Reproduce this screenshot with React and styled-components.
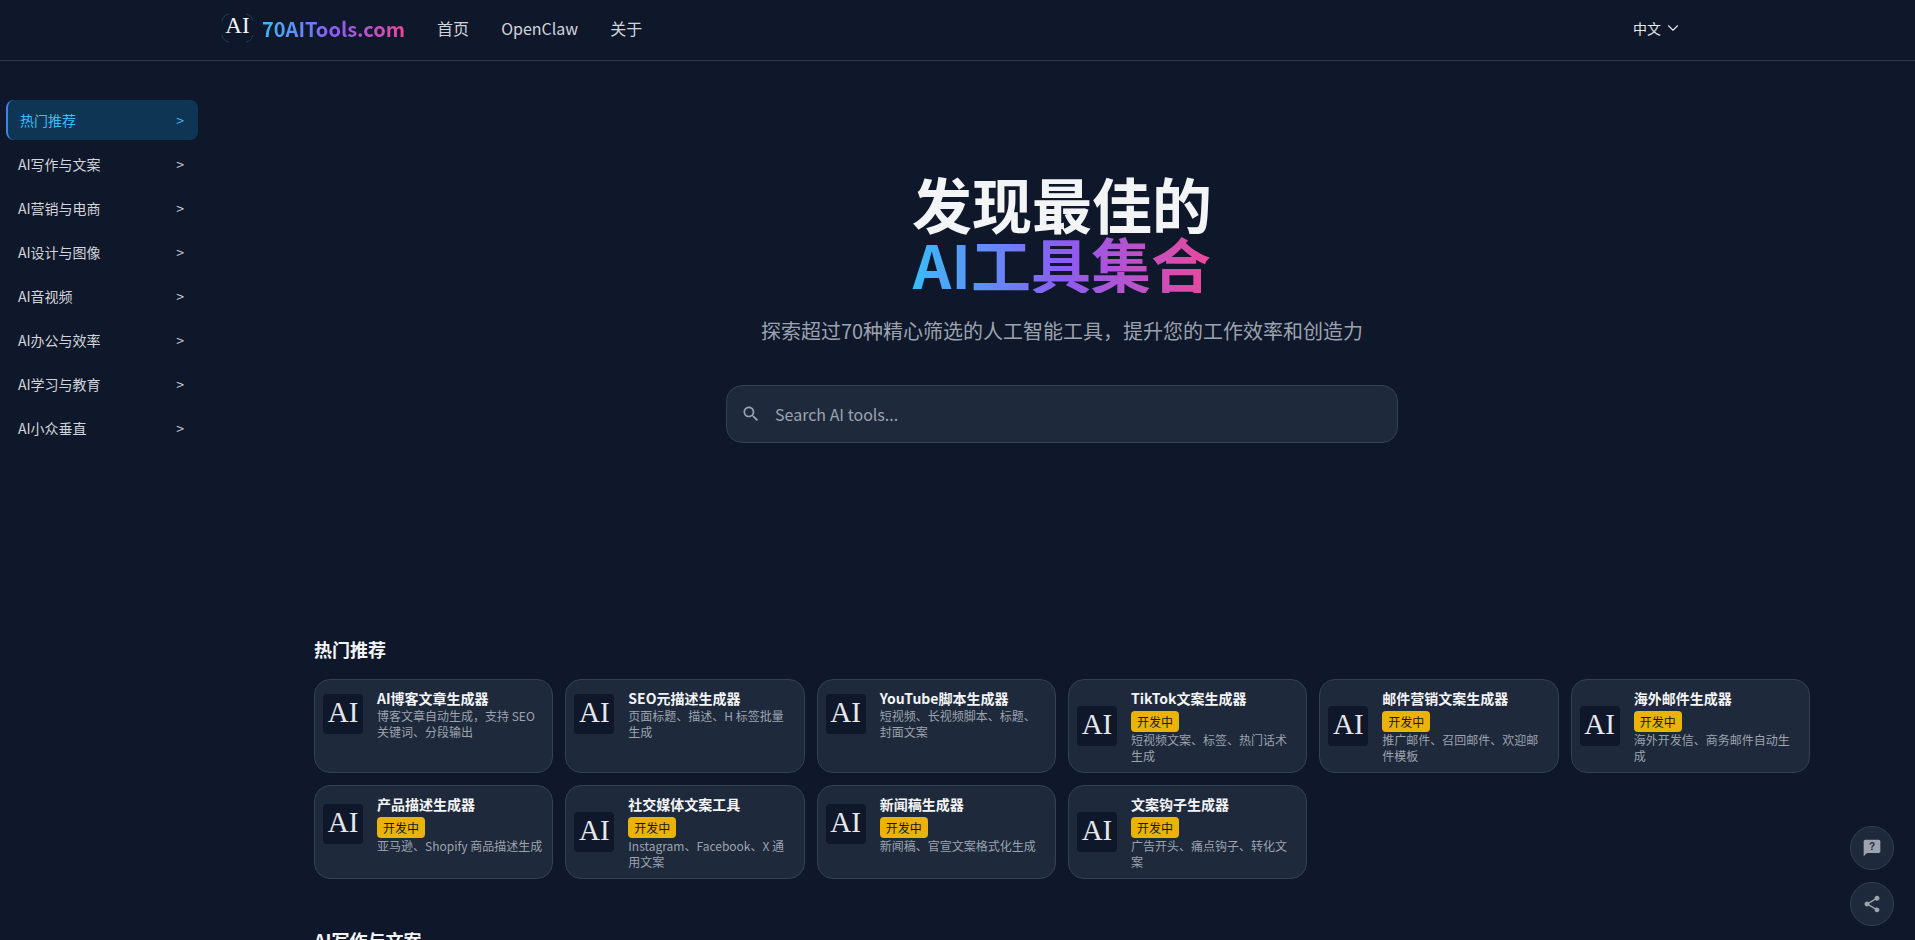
import React from 'react';
import styled, { createGlobalStyle } from 'styled-components';
import { ChevronDown } from 'lucide-react';

const hotTools = [
  { name: 'AI博客文章生成器', desc: '博客文章自动生成，支持 SEO 关键词、分段输出' },
  { name: 'SEO元描述生成器', desc: '页面标题、描述、H 标签批量生成' },
  { name: 'YouTube脚本生成器', desc: '短视频、长视频脚本、标题、封面文案' },
  { name: 'TikTok文案生成器', desc: '短视频文案、标签、热门话术生成', dev: true },
  { name: '邮件营销文案生成器', desc: '推广邮件、召回邮件、欢迎邮件模板', dev: true },
  { name: '海外邮件生成器', desc: '海外开发信、商务邮件自动生成', dev: true },
  { name: '产品描述生成器', desc: '亚马逊、Shopify 商品描述生成', dev: true },
  { name: '社交媒体文案工具', desc: 'Instagram、Facebook、X 通用文案', dev: true },
  { name: '新闻稿生成器', desc: '新闻稿、官宣文案格式化生成', dev: true },
  { name: '文案钩子生成器', desc: '广告开头、痛点钩子、转化文案', dev: true },
];

const categories = ['热门推荐', 'AI写作与文案', 'AI营销与电商', 'AI设计与图像', 'AI音视频', 'AI办公与效率', 'AI学习与教育', 'AI小众垂直'];

const GlobalStyle = createGlobalStyle`
  html, body {
    margin: 0;
    height: 100%;
    overflow: hidden;
    background: #0f172a;
    font-family: "Noto Sans CJK SC", "Noto Sans", sans-serif;
  }
  * { box-sizing: border-box; }
`;

const Page = styled.div`
  height: 100vh;
  overflow: hidden;
  background: #0f172a;
  color: #f3f4f6;
`;

const Header = styled.header`
  height: 61px;
  border-bottom: 1px solid #293548;
  display: flex;
  align-items: center;
  padding: 0 223px 4px 221px;
`;

const LogoSvg = styled.svg`
  width: 33px;
  height: 32px;
  flex: none;
  margin: 0 8px 1px 0;
`;

const LogoText = styled.span`
  font-size: 20px;
  font-weight: 700;
  background: linear-gradient(90deg, #38bdf8, #8b5cf6, #ec4899);
  -webkit-background-clip: text;
  background-clip: text;
  color: transparent;
  margin-right: 32px;
`;

const NavLink = styled.a`
  font-size: 16px;
  color: #d1d5db;
  margin-right: 32px;
`;

const Lang = styled.div`
  margin-left: auto;
  margin-right: 10px;
  display: flex;
  align-items: center;
  gap: 3px;
  font-size: 14px;
  color: #e5e7eb;
`;

const Body = styled.div`
  display: flex;
  align-items: flex-start;
`;

const Sidebar = styled.nav`
  width: 208px;
  flex: none;
  padding: 39px 10px 0 6px;
  display: flex;
  flex-direction: column;
  gap: 4px;
`;

const SideItem = styled.div`
  height: 40px;
  display: flex;
  align-items: center;
  justify-content: space-between;
  padding: 0 14px 0 12px;
  border-radius: 8px;
  font-size: 14px;
  color: ${p => (p.$active ? '#38bdf8' : '#d1d5db')};
  background: ${p => (p.$active ? '#0f3554' : 'transparent')};
  border-left: ${p => (p.$active ? '2px solid #3b82f6' : 'none')};
`;

const SideArrow = styled.span`
  font-size: 14px;
  line-height: 1;
  margin-bottom: 1px;
`;

const Main = styled.main`
  flex: 1;
  min-width: 0;
  padding: 0 105px 0 106px;
`;

const Hero = styled.section`
  display: flex;
  flex-direction: column;
  align-items: center;
  padding-top: 112px;
  height: 574px;
`;

const Title = styled.h1`
  margin: 0;
  font-size: 60px;
  line-height: 60px;
  font-weight: 700;
  text-align: center;
  color: #f3f4f6;
`;

const Gradient = styled.span`
  display: block;
  background: linear-gradient(90deg, #38bdf8, #8b5cf6, #ec4899);
  -webkit-background-clip: text;
  background-clip: text;
  color: transparent;
`;

const Subtitle = styled.p`
  margin: 24px 0 0;
  font-size: 20px;
  line-height: 28px;
  color: #9ca3af;
`;

const SearchBox = styled.div`
  margin-top: 40px;
  width: 672px;
  height: 58px;
  display: flex;
  align-items: center;
  gap: 14px;
  padding: 0 14px;
  border-radius: 16px;
  background: #1e293b;
  border: 1px solid #334155;
  color: #9ca3af;
  font-size: 16px;
`;

const SectionTitle = styled.h2`
  margin: 0 0 16px;
  font-size: 18px;
  line-height: 28px;
  font-weight: 700;
  color: #f3f4f6;
`;

const Grid = styled.div`
  display: grid;
  grid-template-columns: repeat(6, 1fr);
  gap: 12px;
  margin-bottom: 47px;
`;

const Card = styled.article`
  height: 94px;
  padding: 8px;
  border-radius: 16px;
  background: #1e293b;
  border: 1px solid #334155;
`;

const CardRow = styled.div`
  display: flex;
  align-items: center;
  gap: 14px;
`;

const CardIcon = styled.div`
  width: 40px;
  height: 40px;
  flex: none;
  border-radius: 4px;
  background: #0f172a;
  display: flex;
  align-items: center;
  justify-content: center;
  padding-bottom: 4px;
  font: 29px/1 "Liberation Serif", serif;
  color: #e5e7eb;
`;

const CardText = styled.div`
  min-width: 0;
  flex: 1;
`;

const CardName = styled.div`
  font-size: 14px;
  line-height: 20px;
  font-weight: 700;
  color: #f3f4f6;
`;

const Badge = styled.span`
  display: block;
  width: 48px;
  height: 21px;
  margin-top: 3px;
  border-radius: 4px;
  background: #eab308;
  color: #111827;
  font-size: 12px;
  line-height: 21px;
  text-align: center;
`;

const CardDesc = styled.div`
  font-size: 12px;
  line-height: 16px;
  color: #9ca3af;
`;

const Floating = styled.div`
  position: fixed;
  right: 21px;
  bottom: 14px;
  display: flex;
  flex-direction: column;
  gap: 12px;
`;

const RoundButton = styled.button`
  width: 44px;
  height: 44px;
  padding: 0;
  border-radius: 50%;
  border: 1px solid #334155;
  background: #1e293b;
  display: flex;
  align-items: center;
  justify-content: center;
`;

const LogoMark = () => (
  <LogoSvg viewBox="0 0 33 32" fill="none">
    <g stroke="#1f3a63" strokeWidth="1">
      <path d="M1 9a9 9 0 0 1 7-7" />
      <path d="M25 2a9 9 0 0 1 7 7" />
      <path d="M1 23a9 9 0 0 0 7 7" />
      <path d="M25 30a9 9 0 0 0 7-7" />
    </g>
    <text x="16.5" y="21" textAnchor="middle" fontSize="23" fontFamily="Liberation Serif" fill="#f3f4f6">AI</text>
  </LogoSvg>
);

const SearchIcon = () => (
  <svg width="20" height="20" viewBox="0 0 24 24" fill="#9ca3af">
    <path d="M15.5 14h-.79l-.28-.27C15.41 12.59 16 11.11 16 9.5 16 5.91 13.09 3 9.5 3S3 5.91 3 9.5 5.91 16 9.5 16c1.61 0 3.09-.59 4.23-1.57l.27.28v.79l5 4.99L20.49 19l-4.99-5zm-6 0C7.01 14 5 11.99 5 9.5S7.01 5 9.5 5 14 7.01 14 9.5 11.99 14 9.5 14z" />
  </svg>
);

const Chat = () => (
  <svg width="20" height="20" viewBox="0 0 24 24" fill="#9ca3af">
    <path d="M20 2H4c-1.1 0-2 .9-2 2v18l4-4h14c1.1 0 2-.9 2-2V4c0-1.1-.9-2-2-2z" />
    <text x="12" y="14" textAnchor="middle" fontSize="12" fontWeight="700" fill="#1e293b" fontFamily="Liberation Sans">?</text>
  </svg>
);

const Share = () => (
  <svg width="20" height="20" viewBox="0 0 24 24" fill="#9ca3af">
    <path d="M18 16.08c-.76 0-1.44.3-1.96.77L8.91 12.7c.05-.23.09-.46.09-.7s-.04-.47-.09-.7l7.05-4.11c.54.5 1.25.81 2.04.81 1.66 0 3-1.34 3-3s-1.34-3-3-3-3 1.34-3 3c0 .24.04.47.09.7L8.04 9.81C7.5 9.31 6.79 9 6 9c-1.66 0-3 1.34-3 3s1.34 3 3 3c.79 0 1.5-.31 2.04-.81l7.12 4.16c-.05.21-.08.43-.08.65 0 1.61 1.31 2.92 2.92 2.92s2.92-1.31 2.92-2.92-1.31-2.92-2.92-2.92z" />
  </svg>
);

function ToolCard({ tool }) {
  return (
    <Card>
      <CardRow>
        <CardIcon>AI</CardIcon>
        <CardText>
          <CardName>{tool.name}</CardName>
          {tool.dev && <Badge>开发中</Badge>}
          <CardDesc>{tool.desc}</CardDesc>
        </CardText>
      </CardRow>
    </Card>
  );
}

export default function App() {
  return (
    <Page>
      <GlobalStyle />
      <Header>
        <LogoMark />
        <LogoText>70AITools.com</LogoText>
        <NavLink>首页</NavLink>
        <NavLink>OpenClaw</NavLink>
        <NavLink>关于</NavLink>
        <Lang>中文 <ChevronDown size={18} strokeWidth={1.5} /></Lang>
      </Header>
      <Body>
        <Sidebar>
          {categories.map((c, i) => (
            <SideItem key={c} $active={i === 0}>
              {c}
              <SideArrow>&gt;</SideArrow>
            </SideItem>
          ))}
        </Sidebar>
        <Main>
          <Hero>
            <Title>
              发现最佳的
              <Gradient>AI工具集合</Gradient>
            </Title>
            <Subtitle>探索超过70种精心筛选的人工智能工具，提升您的工作效率和创造力</Subtitle>
            <SearchBox>
              <SearchIcon />
              Search AI tools...
            </SearchBox>
          </Hero>
          <SectionTitle>热门推荐</SectionTitle>
          <Grid>
            {hotTools.map(t => <ToolCard key={t.name} tool={t} />)}
          </Grid>
          <SectionTitle>AI写作与文案</SectionTitle>
        </Main>
      </Body>
      <Floating>
        <RoundButton><Chat /></RoundButton>
        <RoundButton><Share /></RoundButton>
      </Floating>
    </Page>
  );
}
